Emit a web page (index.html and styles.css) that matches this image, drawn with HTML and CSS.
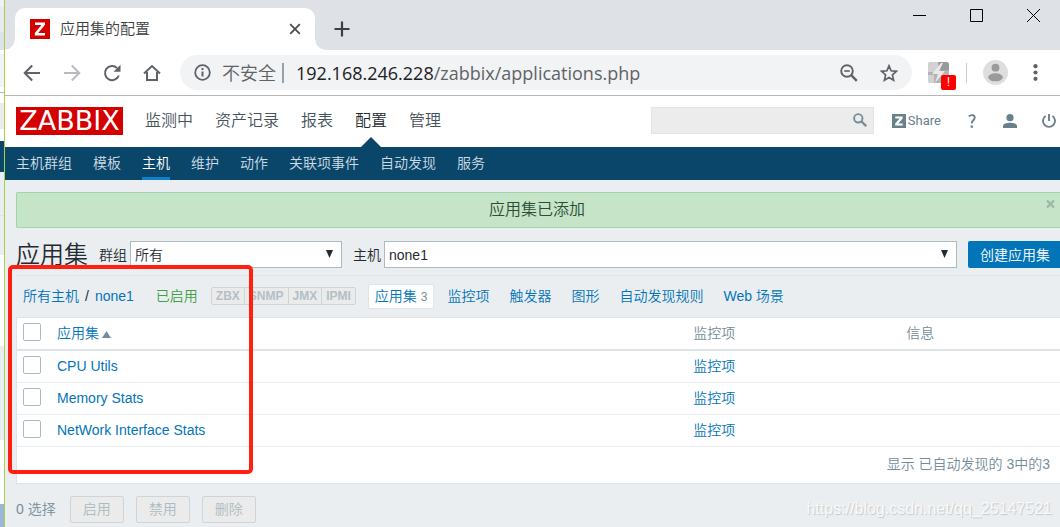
FILE: index.html
```html
<!DOCTYPE html>
<html lang="zh-CN">
<head>
<meta charset="utf-8">
<title>应用集的配置</title>
<link rel="stylesheet" href="styles.css">
</head>
<body>
<div class="backdrop" aria-hidden="true"></div>
<div class="window">
  <div class="tabbar">
    <div class="tab">
      <svg class="favicon" width="20" height="20" viewBox="0 0 20 20"><path fill="#d40000" d="M0 0h20v20H0z"/><path fill="#fff" d="M5 3.500h10v2.300L8.200 14H15v2.500H4.800v-2.400L11.500 6H5z"/></svg>
      <span class="tab-title">应用集的配置</span>
      <button class="icon-btn" aria-label="关闭标签页"><svg width="12" height="12" viewBox="0 0 12 12"><path stroke="#4a4d51" stroke-width="1.800" d="M1.200 1.200l9.600 9.600M10.800 1.200l-9.600 9.600"/></svg></button>
    </div>
    <button class="icon-btn new-tab" aria-label="新标签页"><svg width="16" height="16" viewBox="0 0 16 16"><path stroke="#3c4043" stroke-width="2.200" d="M8 .5v15M.5 8h15"/></svg></button>
    <div class="win-controls">
      <button class="icon-btn" aria-label="最小化"><svg width="13" height="13" viewBox="0 0 13 13"><path stroke="#000" d="M0 6.500h13"/></svg></button>
      <button class="icon-btn" aria-label="最大化"><svg width="13" height="13" viewBox="0 0 13 13"><path fill="none" stroke="#000" d="M.5.5h12v12H.5z"/></svg></button>
      <button class="icon-btn" aria-label="关闭"><svg width="13" height="13" viewBox="0 0 13 13"><path stroke="#000" d="M0 0l13 13M13 0L0 13"/></svg></button>
    </div>
  </div>

  <div class="toolbar">
    <div class="nav-btns">
      <button class="icon-btn" aria-label="后退"><svg width="18" height="18" viewBox="0 0 18 18"><path fill="none" stroke="#5f6368" stroke-width="2" d="M17 9H2M9.200 1.500L1.700 9l7.500 7.500"/></svg></button>
      <button class="icon-btn" aria-label="前进"><svg width="18" height="18" viewBox="0 0 18 18"><path fill="none" stroke="#b9bbbe" stroke-width="2" d="M1 9h15M8.800 1.500L16.300 9l-7.500 7.500"/></svg></button>
      <button class="icon-btn" aria-label="重新加载"><svg width="18" height="18" viewBox="0 0 18 18"><path fill="none" stroke="#5f6368" stroke-width="2" d="M15.800 11.500A7.100 7.100 0 1 1 14 3.900"/><path fill="#5f6368" d="M17.500.8v7h-7z"/></svg></button>
      <button class="icon-btn" aria-label="主页"><svg width="18" height="18" viewBox="0 0 18 18"><path fill="none" stroke="#5f6368" stroke-width="2" d="M1 9.500l8-7.500 8 7.500M4 8v8h10V8"/></svg></button>
    </div>
    <div class="omnibox">
      <svg width="17" height="17" viewBox="0 0 17 17"><circle cx="8.500" cy="8.500" r="7.300" fill="none" stroke="#5f6368" stroke-width="1.800"/><path stroke="#5f6368" stroke-width="2" d="M8.500 7.500v5M8.500 4v2"/></svg>
      <span class="insecure">不安全</span>
      <span class="omni-sep"></span>
      <span class="url"><span class="host">192.168.246.228</span>/zabbix/applications.php</span>
      <button class="icon-btn zoom-out" aria-label="缩放"><svg width="18" height="18" viewBox="0 0 18 18"><circle cx="7" cy="7" r="5.800" fill="none" stroke="#5f6368" stroke-width="1.900"/><path stroke="#5f6368" stroke-width="1.600" d="M4.200 7h5.600"/><path stroke="#5f6368" stroke-width="2.400" d="M11.200 11.200l5.600 5.600"/></svg></button>
      <button class="icon-btn star" aria-label="添加书签"><svg width="18" height="18" viewBox="0 0 18 18"><path fill="none" stroke="#5f6368" stroke-width="1.700" d="M9 1.800l2.100 5 5.400.500-4.100 3.600 1.200 5.300L9 13.400l-4.600 2.800 1.200-5.300L1.500 7.300l5.400-.5z"/></svg></button>
    </div>
    <div class="extension">
      <svg width="21" height="21" viewBox="0 0 21 21"><rect width="21" height="21" rx="3" fill="#b4b4b4"/><path fill="#d2d2d2" d="M3 0h7v10H0V3a3 3 0 0 1 3-3zM0 13h6v8H3a3 3 0 0 1-3-3z"/><path fill="#999" d="M10 0h8a3 3 0 0 1 3 3v5l-8 1z"/><path fill="#e8e8e8" d="M13 1L4 12h6l-3 9 10-12h-6l4-8z"/></svg>
      <span class="badge">!</span>
    </div>
    <span class="bar-sep"></span>
    <button class="icon-btn avatar" aria-label="用户"><svg width="25" height="25" viewBox="0 0 25 25"><circle cx="12.500" cy="12.500" r="12.500" fill="#dedede"/><circle cx="12.500" cy="7.700" r="3.900" fill="#9b9b9b"/><ellipse cx="12.500" cy="17.300" rx="7.300" ry="4" fill="#9b9b9b"/></svg></button>
    <button class="icon-btn menu" aria-label="菜单"><svg width="5" height="17" viewBox="0 0 5 17"><g fill="#5f6368"><circle cx="2.500" cy="2.200" r="2.100"/><circle cx="2.500" cy="8.500" r="2.100"/><circle cx="2.500" cy="14.800" r="2.100"/></g></svg></button>
  </div>

  <div class="page">
    <header class="header">
      <a class="logo" href="#">ZABBIX</a>
      <nav class="main-nav">
        <a href="#">监测中</a><a href="#">资产记录</a><a href="#">报表</a><a href="#" class="active">配置</a><a href="#">管理</a>
      </nav>
      <div class="tools">
        <form class="search">
          <input type="text" aria-label="搜索">
          <button type="button" class="icon-btn" aria-label="搜索"><svg width="14" height="14" viewBox="0 0 14 14"><circle cx="5.300" cy="5.300" r="4.200" fill="none" stroke="#768d99" stroke-width="1.900"/><path stroke="#768d99" stroke-width="2.300" d="M8.300 8.300l4.900 4.900"/></svg></button>
        </form>
        <a class="share" href="#"><svg width="14" height="14" viewBox="0 0 14 14"><path fill="#69808d" d="M0 0h14v14H0z"/><path fill="#fff" d="M3.300 2.500h7.400v1.900L6.200 9.600h4.500v1.900H3.200V9.600l4.500-5.200H3.300z"/></svg>Share</a>
        <a class="help" href="#" aria-label="帮助"><svg width="8" height="14" viewBox="0 0 8 14"><path fill="none" stroke="#69808d" stroke-width="1.900" d="M.8 2.300C2.300.700 6.700.300 6.700 3.600c0 2.600-3 2.700-3 5.900"/><path fill="#69808d" d="M2.600 11.500h2.300v2.300H2.600z"/></svg></a>
        <a class="profile" href="#" aria-label="个人资料"><svg width="14" height="14" viewBox="0 0 14 14"><circle cx="7" cy="3.700" r="3.600" fill="#69808d"/><path fill="#69808d" d="M0 14v-2c0-2 3.500-3.200 7-3.200s7 1.200 7 3.200v2z"/></svg></a>
        <a class="power" href="#" aria-label="退出"><svg width="14" height="14" viewBox="0 0 14 14"><path fill="none" stroke="#69808d" stroke-width="1.900" d="M7 0v7M3.500 2a6 6 0 1 0 7 0"/></svg></a>
      </div>
    </header>
    <nav class="sub-nav">
      <a href="#">主机群组</a><a href="#">模板</a><a href="#" class="active">主机</a><a href="#">维护</a><a href="#">动作</a><a href="#">关联项事件</a><a href="#">自动发现</a><a href="#">服务</a>
    </nav>

    <main class="content">
      <div class="message" role="status">应用集已添加
        <button class="icon-btn dismiss" aria-label="关闭消息"><svg width="9" height="8" viewBox="0 0 9 8"><path stroke="#9bb8a9" stroke-width="2.300" d="M1 .5l7 7M8 .5l-7 7"/></svg></button>
      </div>

      <div class="title-row">
        <h1>应用集</h1>
        <label class="group-label" for="group">群组</label>
        <span class="select group-select"><select id="group"><option>所有</option></select><svg width="7" height="8" viewBox="0 0 7 8"><path fill="#1f2c33" d="M0 0h7L3.500 8z"/></svg></span>
        <label class="host-label" for="host">主机</label>
        <span class="select host-select"><select id="host"><option>none1</option></select><svg width="7" height="8" viewBox="0 0 7 8"><path fill="#1f2c33" d="M0 0h7L3.500 8z"/></svg></span>
        <button class="create">创建应用集</button>
      </div>

      <div class="object-nav">
        <a href="#">所有主机</a><span class="slash">/</span><a href="#">none1</a>
        <span class="enabled">已启用</span>
        <span class="status"><span>ZBX</span><span>SNMP</span><span>JMX</span><span>IPMI</span></span>
        <a href="#" class="current">应用集 <small>3</small></a>
        <div class="object-links"><a href="#">监控项</a><a href="#">触发器</a><a href="#">图形</a><a href="#">自动发现规则</a><a href="#">Web 场景</a></div>
      </div>

      <table class="list">
        <colgroup><col class="c-check"><col class="c-name"><col class="c-items"><col></colgroup>
        <thead>
          <tr><th><input type="checkbox" aria-label="全选"></th><th><a href="#">应用集<svg width="9" height="7" viewBox="0 0 9 7"><path fill="#768d99" d="M4.500 0L9 7H0z"/></svg></a></th><th>监控项</th><th>信息</th></tr>
        </thead>
        <tbody>
          <tr><td><input type="checkbox" aria-label="CPU Utils"></td><td><a href="#">CPU Utils</a></td><td><a href="#">监控项</a></td><td></td></tr>
          <tr><td><input type="checkbox" aria-label="Memory Stats"></td><td><a href="#">Memory Stats</a></td><td><a href="#">监控项</a></td><td></td></tr>
          <tr><td><input type="checkbox" aria-label="NetWork Interface Stats"></td><td><a href="#">NetWork Interface Stats</a></td><td><a href="#">监控项</a></td><td></td></tr>
        </tbody>
        <tfoot><tr><td colspan="4">显示 已自动发现的 3中的3</td></tr></tfoot>
      </table>

      <div class="actions">
        <span>0 选择</span>
        <button disabled>启用</button><button disabled>禁用</button><button disabled>删除</button>
      </div>
    </main>
  </div>
</div>
<div class="highlight" aria-hidden="true"></div>
<div class="watermark">https://blog.csdn.net/qq_25147521</div>
</body>
</html>
```
FILE: styles.css
```css
* { box-sizing: border-box; }

body {
  margin: 0;
  position: relative;
  display: flex;
  min-height: 100vh;
  overflow: hidden;
  background: #ebeef0;
  color: #1f2c33;
  font: 350 14px/18px "Liberation Sans", "Noto Sans CJK SC", sans-serif;
}

a { color: #0275b8; text-decoration: none; }
svg { display: block; flex: none; }

.icon-btn {
  display: flex;
  align-items: center;
  justify-content: center;
  padding: 0;
  border: 0;
  background: none;
}

/* Sliver of the window behind this one */
.backdrop {
  flex: none;
  width: 4px;
  background: linear-gradient(
    #eef0f2 0 7px, #e8eaed 7px 32px, #dee1e6 32px 50px, #fff 50px 54px,
    #f1f3f4 54px 87px, #fff 87px 92px, #b6b6b6 92px 93px, #fff 93px 103px,
    #ececec 103px 129px, #fff 129px 141px, #0a466a 141px 172px,
    #ebeef0 172px 215px, #dfe4e7 215px 216px, #ebeef0 216px 255px,
    #fff 255px 346px, #ebeef0 346px 440px, #fff 440px 504px, #9db6d6 504px);
}

.window {
  flex: 1;
  min-width: 0;
  border-left: 1px solid #a8d04a;
}

/* Browser tab strip */
.tabbar {
  display: flex;
  height: 50px;
  padding-left: 10px;
  background: #dee1e6;
}

.tab {
  position: relative;
  display: flex;
  align-items: center;
  width: 300px;
  margin-top: 8px;
  padding: 0 14px 0 15px;
  border-radius: 10px 10px 0 0;
  background: #fff;
}

.tab::before,
.tab::after {
  content: "";
  position: absolute;
  bottom: 0;
  width: 10px;
  height: 10px;
}

.tab::before { right: 100%; background: radial-gradient(circle at 0 0, #dee1e6 9px, #fff 10px); }
.tab::after { left: 100%; background: radial-gradient(circle at 100% 0, #dee1e6 9px, #fff 10px); }

.tab-title {
  flex: 1;
  margin-left: 10px;
  color: #3c4043;
  font-size: 15px;
}

.new-tab { margin: 8px 0 0 19px; }

.win-controls {
  display: flex;
  gap: 44px;
  height: 30px;
  margin-left: auto;
  padding-right: 20px;
}

/* Browser toolbar */
.toolbar {
  display: flex;
  align-items: center;
  height: 46px;
  padding: 0 22px 0 18px;
  border-bottom: 1px solid #b6b6b6;
  background: #fff;
}

.nav-btns { display: flex; gap: 22px; }

.omnibox {
  flex: 1;
  display: flex;
  align-items: center;
  height: 35px;
  margin-left: 19px;
  padding: 0 14px;
  border-radius: 18px;
  background: #f1f3f4;
  color: #5f6368;
  font: 18px/24px "Open Sans", "Noto Sans CJK SC", sans-serif;
}

.insecure { margin-left: 11px; font-weight: 350; }
.omni-sep { width: 2px; height: 20px; margin: 0 12px 0 6px; background: #9aa0a6; }
.host { color: #202124; }
.zoom-out { margin-left: auto; }
.star { margin-left: 22px; }

.extension { position: relative; margin-left: 16px; }

.badge {
  position: absolute;
  top: 13px;
  left: 13px;
  width: 15px;
  height: 15px;
  border-radius: 2px;
  background: #f00;
  color: #fff;
  font-size: 12px;
  line-height: 15px;
  text-align: center;
}

.bar-sep { width: 1px; height: 20px; margin: 0 16px 0 17px; background: #c8cacd; }
.menu { margin-left: 25px; }

/* Application header */
.header {
  display: flex;
  align-items: flex-start;
  height: 51px;
  padding: 11px 4px 0 11px;
  background: #fff;
}

.logo {
  width: 107px;
  height: 28px;
  background: #d40000;
  color: #fff;
  font: 27px/28px "DejaVu Sans", sans-serif;
  text-align: center;
}

.main-nav {
  display: flex;
  gap: 22px;
  align-self: stretch;
  margin-left: 22px;
  font-size: 16px;
  line-height: 28px;
}

.main-nav a { position: relative; color: #47535a; }
.main-nav .active { color: #1f2c33; }

.main-nav .active::after {
  content: "";
  position: absolute;
  bottom: 0;
  left: 50%;
  margin-left: -10px;
  border: 10px solid transparent;
  border-top-width: 0;
  border-bottom-color: #0a466a;
}

.tools { display: flex; align-items: center; margin-left: auto; }

.search { position: relative; width: 223px; }

.search input {
  display: block;
  width: 100%;
  height: 27px;
  border: 1px solid #e2e4e5;
  background: #ececec;
}

.search .icon-btn { position: absolute; top: 6px; right: 7px; }

.share {
  display: flex;
  align-items: center;
  gap: 2px;
  margin-left: 18px;
  color: #69808d;
  font: 13px/18px Roboto, sans-serif;
}

.help { margin-left: 27px; }
.profile { margin-left: 27px; }
.power { margin-left: 25px; }

.sub-nav {
  display: flex;
  gap: 21px;
  height: 33px;
  padding-left: 11px;
  background: #0a466a;
  line-height: 32px;
}

.sub-nav a { color: #d0dde5; }
.sub-nav .active { border-bottom: 3px solid #0f80c9; color: #fff; }

.content { padding: 12px 0 5px 11px; }

.message {
  position: relative;
  height: 36px;
  padding-right: 3px;
  border: 1px solid #a3d4a8;
  border-right: 0;
  border-radius: 2px 0 0 2px;
  background: #c6e4c8;
  color: #2b4f33;
  font-size: 16px;
  line-height: 34px;
  text-align: center;
}

.dismiss { position: absolute; top: 7px; right: 5px; }

.title-row {
  display: flex;
  align-items: center;
  height: 48px;
  padding-top: 6px;
  border-bottom: 1px solid #dfe4e7;
}

h1 { margin: 0; font-size: 24px; font-weight: 350; line-height: 28px; }
.group-label { margin: 0 3px 0 11px; }
.host-label { margin: 0 3px 0 11px; }
.select { position: relative; }
.group-select { width: 212px; }
.host-select { flex: 1; }

.select select {
  appearance: none;
  display: block;
  width: 100%;
  height: 27px;
  padding: 0 4px;
  border: 1px solid #acbbc2;
  border-radius: 0;
  background: #fff;
  color: #1f2c33;
  font: inherit;
}

.select svg { position: absolute; top: 9px; right: 9px; pointer-events: none; }

.create {
  height: 27px;
  margin-left: 11px;
  padding: 0 10px 0 12px;
  border: 0;
  border-radius: 2px 0 0 2px;
  background: #0275b8;
  color: #fff;
  font: inherit;
}

.object-nav {
  display: flex;
  align-items: center;
  height: 41px;
  padding: 0 0 1px 7px;
}

.slash { margin: 0 6px; }
.enabled { margin-left: 22px; color: #429e47; }
.status { display: flex; margin-left: 13px; color: #b2c0c7; font-size: 12px; line-height: 16px; }

.status span {
  padding: 0 4px;
  border: 1px solid #ccd5d9;
  background: #ebebeb;
  font-weight: 700;
}

.status span + span { border-left-width: 0; }
.status span:first-child { border-radius: 2px 0 0 2px; }
.status span:last-child { border-radius: 0 2px 2px 0; }

.current {
  margin-left: 12px;
  padding: 2px 6px;
  border: 1px solid #dfe4e7;
  border-radius: 2px;
  background: #fff;
}

.current small { color: #768d99; font-size: 12px; }
.object-links { display: flex; gap: 20px; margin-left: 13px; }

/* Application list */
.list {
  width: 100%;
  table-layout: fixed;
  border-collapse: separate;
  border-spacing: 0;
  border: 1px solid #dfe4e7;
  border-right: 0;
  background: #fff;
}

.c-check { width: 34px; }
.c-name { width: 61%; }
.c-items { width: 213px; }

.list th,
.list td {
  height: 32px;
  padding: 0 6px 2px;
  border-bottom: 1px solid #ebeef0;
  font-weight: 350;
  text-align: left;
}

.list th { height: 33px; border-bottom: 2px solid #dfe4e7; color: #768d99; }
.list th svg { display: inline-block; margin-left: 3px; }
.list tfoot td { height: 36px; padding-right: 10px; border-bottom: 0; color: #768d99; text-align: right; }

.list input {
  appearance: none;
  display: block;
  width: 18px;
  height: 18px;
  margin: 0 0 1px;
  border: 1px solid #acbbc2;
  border-radius: 2px;
  background: #fff;
}

.actions {
  display: flex;
  align-items: center;
  margin-top: 12px;
  color: #768d99;
}

.actions button {
  width: 54px;
  height: 27px;
  margin-left: 12px;
  padding: 0 0 2px;
  border: 1px solid #ccd5d9;
  border-radius: 2px;
  background: #ebebeb;
  color: #acbbc2;
  font: inherit;
}

.actions span { padding-bottom: 2px; }
.actions span + button { margin-left: 14px; }

/* Annotation over the page */
.highlight {
  position: absolute;
  top: 265px;
  left: 8px;
  width: 245px;
  height: 209px;
  border: 4px solid #ff2012;
  border-radius: 5px;
}

.watermark {
  position: absolute;
  right: 8px;
  bottom: 10px;
  color: #f8f9fa;
  font-size: 16px;
  text-shadow: 1px 1px 1px #c4c8cb;
}
```
